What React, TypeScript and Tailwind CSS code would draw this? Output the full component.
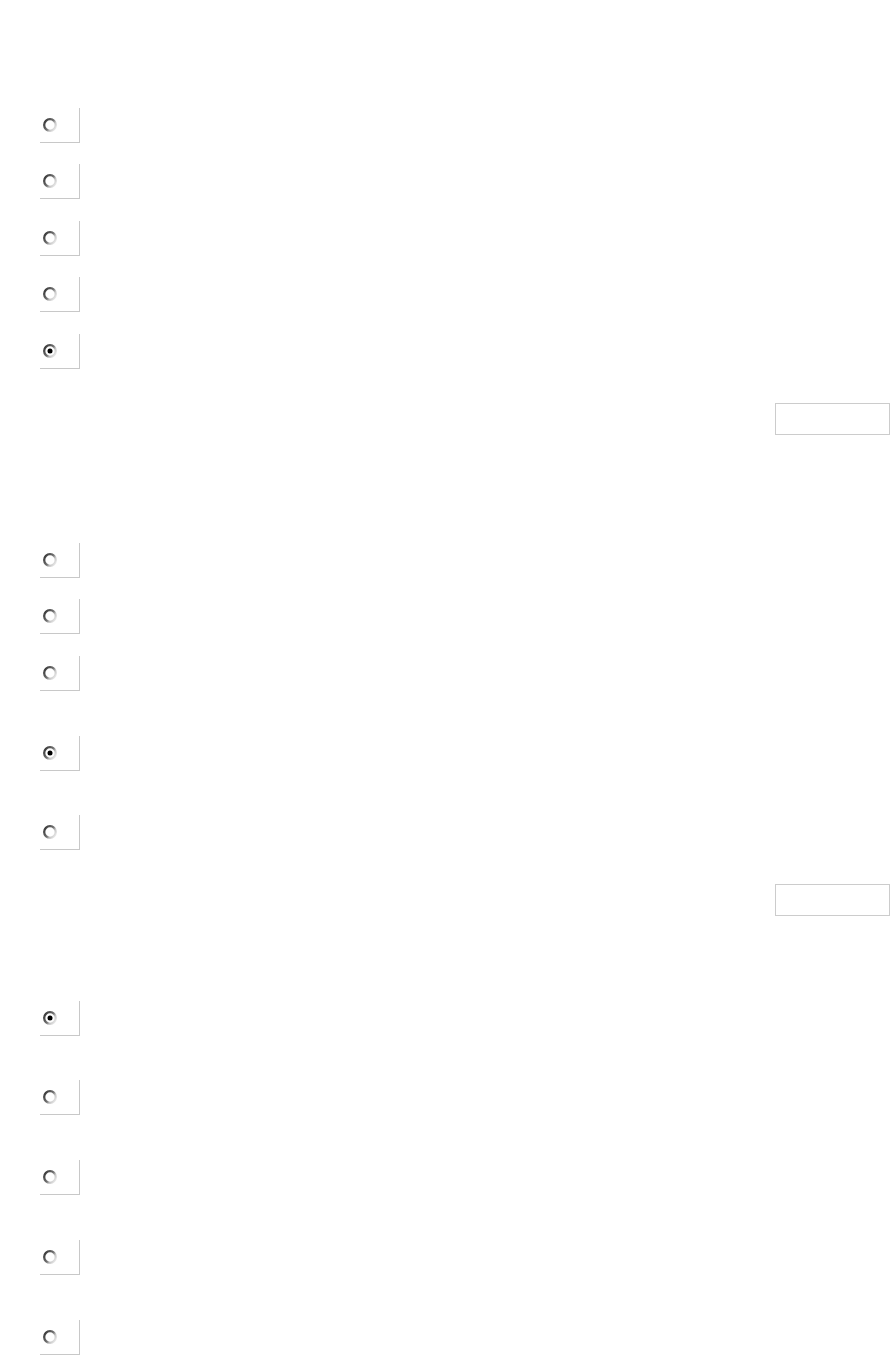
import React from "react";

function Radio({ checked }: { checked: boolean }) {
  const id = checked ? "gc" : "gu";
  return (
    <svg width="16" height="16" viewBox="0 0 16 16" className="block">
      <defs>
        <linearGradient id={id} x1="0" y1="0.15" x2="1" y2="0.85">
          <stop offset="0" stopColor="#383838" />
          <stop offset="0.5" stopColor="#707070" />
          <stop offset="0.7" stopColor="#c4c4c4" />
          <stop offset="1" stopColor="#ececec" />
        </linearGradient>
        <filter id={`${id}b`} x="-20%" y="-20%" width="140%" height="140%">
          <feGaussianBlur stdDeviation="0.4" />
        </filter>
      </defs>
      <g filter={`url(#${id}b)`}>
        <circle cx="8" cy="8" r="5.8" fill="#ffffff" stroke={`url(#${id})`} strokeWidth="2.3" />
        {checked && <circle cx="8" cy="8" r="2.5" fill="#000000" />}
      </g>
    </svg>
  );
}

function Cell({ checked, h }: { checked: boolean; h: number }) {
  return (
    <div style={{ height: h }}>
      <div className="w-[40px] h-[35px] border-r border-b border-[#c8c8c8] pl-[2px] pt-[9px]">
        <Radio checked={checked} />
      </div>
    </div>
  );
}

function TextBox() {
  return (
    <div className="flex justify-end pr-[3px]">
      <div className="w-[115px] h-[32px] border border-[#cccccc] bg-white" />
    </div>
  );
}

export default function App() {
  return (
    <div className="w-[893px] h-[1355px] bg-white overflow-hidden pt-[108px] pl-[40px]" style={{ fontFamily: '"Liberation Sans", Arial, sans-serif' }}>
      <Cell checked={false} h={56} />
      <Cell checked={false} h={57} />
      <Cell checked={false} h={56} />
      <Cell checked={false} h={57} />
      <Cell checked={true} h={69} />
      <TextBox />
      <div className="h-[108px]" />
      <Cell checked={false} h={56} />
      <Cell checked={false} h={57} />
      <Cell checked={false} h={80} />
      <Cell checked={true} h={79} />
      <Cell checked={false} h={69} />
      <TextBox />
      <div className="h-[85px]" />
      <Cell checked={true} h={79} />
      <Cell checked={false} h={80} />
      <Cell checked={false} h={80} />
      <Cell checked={false} h={80} />
      <Cell checked={false} h={35} />
    </div>
  );
}
